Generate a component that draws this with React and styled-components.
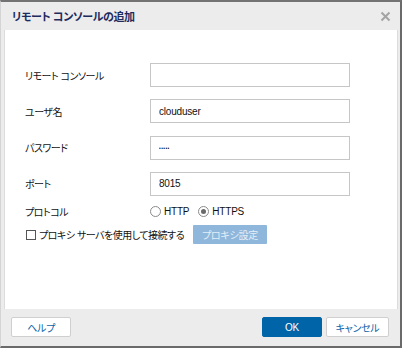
import React from 'react';
import styled, { createGlobalStyle } from 'styled-components';

const GlobalStyle = createGlobalStyle`
	html, body {
		margin: 0;
		padding: 0;
		background: #ececec;
	}
	* {
		box-sizing: border-box;
	}
	body {
		font-family: 'Liberation Sans', 'Noto Sans CJK JP', sans-serif;
		font-feature-settings: 'palt';
		font-size: 10px;
		letter-spacing: -0.5px;
		color: #111;
	}
`;

const Window = styled.div`
	width: 402px;
	height: 348px;
	display: flex;
	flex-direction: column;
	background: #ececec;
	border-top: 2px solid #737373;
	border-right: 2px solid #6a6a6a;
	border-bottom: 2px solid #6a6a6a;
	border-left: 1px solid #d4d4d4;
`;

const TitleBar = styled.div`
	height: 28px;
	display: flex;
	align-items: center;
	justify-content: space-between;
	padding: 0 8px 0 11px;
`;

const Title = styled.h1`
	margin: 0;
	font-size: 11px;
	font-weight: 700;
	color: #1d2b5e;
	letter-spacing: -0.4px;
`;

const CloseButton = styled.button`
	width: 14px;
	height: 14px;
	padding: 0;
	border: 0;
	background: none;
	display: flex;
	align-items: center;
	justify-content: center;
	cursor: pointer;
`;

const Body = styled.div`
	flex: 1;
	margin: 0 2px 0 3px;
	background: #fff;
	border-left: 1px solid #dcdcdc;
	border-right: 1px solid #dcdcdc;
	padding: 33px 0 0 20px;
`;

const Form = styled.div`
	display: grid;
	grid-template-columns: 125px 200px;
	row-gap: 12.33px;
	align-items: center;
`;

const Label = styled.label`
	font-size: 10px;
	color: #111;
`;

const Input = styled.input`
	height: 24px;
	width: 200px;
	border: 1px solid #c6c6c6;
	padding: 0 8px;
	font-family: 'Liberation Sans', sans-serif;
	font-size: ${(props) => (props.type === 'password' ? '5px' : '10px')};
	letter-spacing: ${(props) => (props.type === 'password' ? '0.4px' : '-0.2px')};
	color: #111;
	outline: none;
`;

const ProtoLabel = styled(Label)`
	margin-top: -4px;
`;

const RadioGroup = styled.div`
	display: flex;
	align-items: center;
	gap: 9px;
	margin-top: -4px;
`;

const RadioOption = styled.label`
	display: flex;
	align-items: center;
	gap: 3px;
	font-size: 10px;
	letter-spacing: -0.2px;
	color: #111;
`;

const RadioCircle = styled.span`
	width: 11px;
	height: 11px;
	border-radius: 50%;
	border: 1px solid #8a8a8a;
	background: #fff;
	display: flex;
	align-items: center;
	justify-content: center;

	&::after {
		content: '';
		width: 5px;
		height: 5px;
		border-radius: 50%;
		background: ${(props) => (props.checked ? '#6a6a6a' : 'transparent')};
	}
`;

const ProxyRow = styled.div`
	display: flex;
	align-items: center;
	margin-top: 6px;
	margin-left: 1px;
`;

const CheckBox = styled.span`
	width: 10px;
	height: 10px;
	border: 1px solid #555;
	background: #fff;
	margin-right: 3px;
`;

const ProxyText = styled.span`
	width: 138px;
	white-space: nowrap;
	font-size: 10px;
	color: #111;
`;

const ProxyButton = styled.button`
	margin-left: 16px;
	height: 19px;
	width: 74px;
	border: 0;
	border-radius: 1px;
	background: #8fb7db;
	color: #e3eef8;
	font-family: inherit;
	font-feature-settings: 'palt';
	font-size: 10px;
	letter-spacing: -0.3px;
	padding: 0;
`;

const Footer = styled.div`
	height: 37px;
	display: flex;
	align-items: flex-start;
	justify-content: space-between;
	padding: 8px 11px 0 10px;
`;

const ButtonGroup = styled.div`
	display: flex;
	gap: 4px;
`;

const FooterButton = styled.button`
	height: 20px;
	width: ${(props) => props.width}px;
	border: 1px solid ${(props) => (props.primary ? '#0065a8' : '#cfcfcf')};
	border-radius: 2px;
	background: ${(props) => (props.primary ? '#0065a8' : '#fff')};
	color: ${(props) => (props.primary ? '#fff' : '#0a63a8')};
	font-family: inherit;
	font-feature-settings: 'palt';
	font-size: 10px;
	letter-spacing: -0.3px;
	padding: 0;
	cursor: pointer;
`;

function CloseIcon() {
	return (
		<svg width="11" height="11" viewBox="0 0 11 11">
			<path d="M1.5 1.5 L9.5 9.5 M9.5 1.5 L1.5 9.5" stroke="#a3a3a3" strokeWidth="2" />
		</svg>
	);
}

export default function App() {
	return (
		<>
			<GlobalStyle />
			<Window>
				<TitleBar>
					<Title>リモート コンソールの追加</Title>
					<CloseButton aria-label="閉じる">
						<CloseIcon />
					</CloseButton>
				</TitleBar>
				<Body>
					<Form>
						<Label>リモート コンソール</Label>
						<Input defaultValue="" />
						<Label>ユーザ名</Label>
						<Input defaultValue="clouduser" />
						<Label>パスワード</Label>
						<Input type="password" defaultValue="12345" />
						<Label>ポート</Label>
						<Input defaultValue="8015" />
						<ProtoLabel>プロトコル</ProtoLabel>
						<RadioGroup>
							<RadioOption>
								<RadioCircle />
								HTTP
							</RadioOption>
							<RadioOption>
								<RadioCircle checked />
								HTTPS
							</RadioOption>
						</RadioGroup>
					</Form>
					<ProxyRow>
						<CheckBox />
						<ProxyText>プロキシ サーバを使用して接続する</ProxyText>
						<ProxyButton disabled>プロキシ設定</ProxyButton>
					</ProxyRow>
				</Body>
				<Footer>
					<FooterButton width={60}>ヘルプ</FooterButton>
					<ButtonGroup>
						<FooterButton primary width={60}>OK</FooterButton>
						<FooterButton width={63}>キャンセル</FooterButton>
					</ButtonGroup>
				</Footer>
			</Window>
		</>
	);
}
